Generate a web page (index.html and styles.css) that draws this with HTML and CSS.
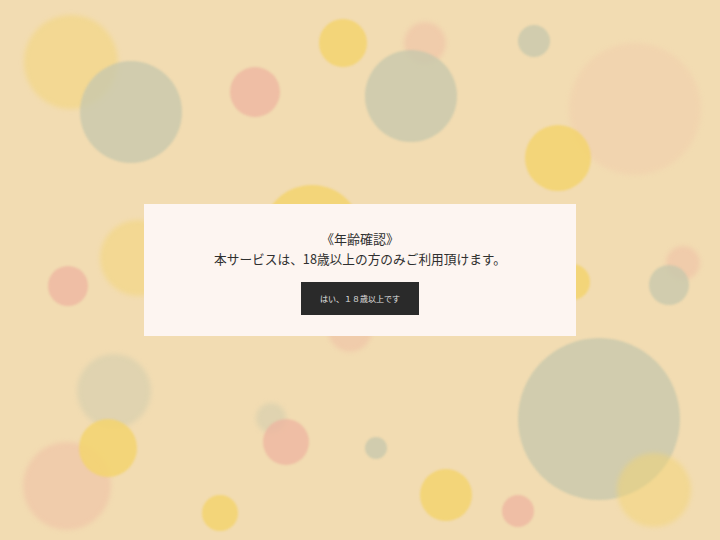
FILE: index.html
```html
<!DOCTYPE html>
<html lang="ja">
<head>
<meta charset="utf-8">
<title>年齢確認</title>
<link rel="stylesheet" href="styles.css">
</head>
<body>
<div class="scene">
  <div class="bokeh">
    <span class="dot y fade c1"></span>
    <span class="dot p fade c24"></span>
    <span class="dot g fade c22"></span>
    <span class="dot g fade c25"></span>
    <span class="dot p fade c8"></span>
    <span class="dot pe fade c11"></span>
    <span class="dot p fade c14"></span>
    <span class="dot p fade c21"></span>
    <span class="dot y fade c6"></span>
    <span class="dot g c2"></span>
    <span class="dot p c3"></span>
    <span class="dot y c4"></span>
    <span class="dot y c5"></span>
    <span class="dot p c7"></span>
    <span class="dot g c9"></span>
    <span class="dot g c10"></span>
    <span class="dot y c12"></span>
    <span class="dot g c13"></span>
    <span class="dot y c15"></span>
    <span class="dot g c16"></span>
    <span class="dot y fade c17"></span>
    <span class="dot g c18"></span>
    <span class="dot y c19"></span>
    <span class="dot p c20"></span>
    <span class="dot y c23"></span>
    <span class="dot p c26"></span>
    <span class="dot y c27"></span>
  </div>
  <div class="overlay">
    <div class="modal">
      <p class="title">《年齢確認》</p>
      <p class="message">本サービスは、18歳以上の方のみご利用頂けます。</p>
      <button class="confirm" type="button">はい、１８歳以上です</button>
    </div>
  </div>
</div>
</body>
</html>
```

FILE: styles.css
```css
html, body {
  margin: 0;
  padding: 0;
}
body {
  width: 720px;
  height: 540px;
  overflow: hidden;
  font-family: "Noto Sans CJK JP", "Noto Sans", sans-serif;
}
.scene {
  position: relative;
  width: 720px;
  height: 540px;
  background: #f2dcb2;
  overflow: hidden;
}
.bokeh {
  position: absolute;
  inset: 0;
}
.dot {
  position: absolute;
  border-radius: 50%;
  filter: blur(0.8px);
}
.dot.y { background: rgba(243, 212, 110, 0.85); }
.dot.g { background: rgba(200, 200, 172, 0.8); }
.dot.p { background: rgba(238, 180, 160, 0.75); }
.dot.pe { background: rgba(240, 196, 168, 0.6); }
.dot.fade { filter: blur(2.5px); opacity: 0.55; }

.c1  { left: 24px;  top: 15px;  width: 94px;  height: 94px; }
.c2  { left: 80px;  top: 61px;  width: 102px; height: 102px; }
.c3  { left: 230px; top: 67px;  width: 50px;  height: 50px; }
.c4  { left: 319px; top: 19px;  width: 48px;  height: 48px; }
.c5  { left: 262px; top: 185px; width: 100px; height: 100px; }
.c6  { left: 100px; top: 220px; width: 76px;  height: 76px; }
.c7  { left: 48px;  top: 266px; width: 40px;  height: 40px; }
.c8  { left: 404px; top: 22px;  width: 42px;  height: 42px; }
.c9  { left: 365px; top: 50px;  width: 92px;  height: 92px; }
.c10 { left: 518px; top: 25px;  width: 32px;  height: 32px; }
.c11 { left: 569px; top: 43px;  width: 132px; height: 132px; }
.c12 { left: 525px; top: 125px; width: 66px;  height: 66px; }
.c13 { left: 649px; top: 265px; width: 40px;  height: 40px; }
.c14 { left: 666px; top: 246px; width: 34px;  height: 34px; }
.c15 { left: 554px; top: 264px; width: 36px;  height: 36px; }
.c16 { left: 518px; top: 338px; width: 162px; height: 162px; }
.c17 { left: 617px; top: 453px; width: 74px;  height: 74px; }
.c18 { left: 365px; top: 437px; width: 22px;  height: 22px; }
.c19 { left: 420px; top: 469px; width: 52px;  height: 52px; }
.c20 { left: 502px; top: 495px; width: 32px;  height: 32px; }
.c21 { left: 328px; top: 308px; width: 44px;  height: 44px; }
.c22 { left: 77px;  top: 354px; width: 74px;  height: 74px; }
.c23 { left: 79px;  top: 419px; width: 58px;  height: 58px; }
.c24 { left: 23px;  top: 442px; width: 88px;  height: 88px; }
.c25 { left: 256px; top: 403px; width: 30px;  height: 30px; }
.c26 { left: 263px; top: 419px; width: 46px;  height: 46px; }
.c27 { left: 202px; top: 495px; width: 36px;  height: 36px; }

.overlay {
  position: absolute;
  inset: 0;
  display: flex;
  align-items: center;
  justify-content: center;
}
.modal {
  width: 432px;
  height: 132px;
  box-sizing: border-box;
  padding-top: 25px;
  background: #fdf5f1;
  display: flex;
  flex-direction: column;
  align-items: center;
  color: #2f2f2f;
}
.title, .message {
  margin: 0;
  font-size: 13px;
  line-height: 20px;
  white-space: nowrap;
}
.message {
  font-size: 12.7px;
}
.confirm {
  margin-top: 13px;
  width: 118px;
  height: 33px;
  border: none;
  background: #2a2a2a;
  color: #e2e2e2;
  font-family: "Noto Sans CJK JP", "Noto Sans", sans-serif;
  font-size: 8px;
  padding: 0;
  cursor: pointer;
}
```
